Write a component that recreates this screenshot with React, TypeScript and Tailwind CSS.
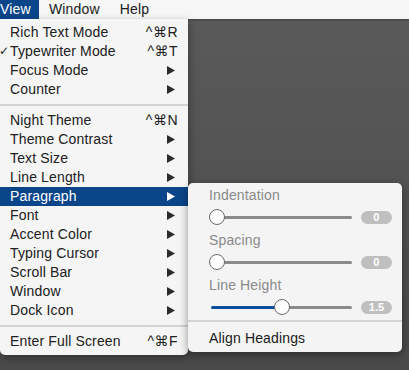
import React from "react";

type Item =
  | { kind: "sep" }
  | { kind: "item"; label: string; shortcut?: string; sub?: boolean; checked?: boolean; active?: boolean };

const items: Item[] = [
  { kind: "item", label: "Rich Text Mode", shortcut: "^⌘R" },
  { kind: "item", label: "Typewriter Mode", shortcut: "^⌘T", checked: true },
  { kind: "item", label: "Focus Mode", sub: true },
  { kind: "item", label: "Counter", sub: true },
  { kind: "sep" },
  { kind: "item", label: "Night Theme", shortcut: "^⌘N" },
  { kind: "item", label: "Theme Contrast", sub: true },
  { kind: "item", label: "Text Size", sub: true },
  { kind: "item", label: "Line Length", sub: true },
  { kind: "item", label: "Paragraph", sub: true, active: true },
  { kind: "item", label: "Font", sub: true },
  { kind: "item", label: "Accent Color", sub: true },
  { kind: "item", label: "Typing Cursor", sub: true },
  { kind: "item", label: "Scroll Bar", sub: true },
  { kind: "item", label: "Window", sub: true },
  { kind: "item", label: "Dock Icon", sub: true },
  { kind: "sep" },
  { kind: "item", label: "Enter Full Screen", shortcut: "^⌘F" },
];

function Arrow({ white }: { white?: boolean }) {
  return (
    <svg width="8" height="9" viewBox="0 0 8 9" className="mr-[3px]">
      <polygon points="0,0 8,4.5 0,9" fill={white ? "#ffffff" : "#2b2b2b"} />
    </svg>
  );
}

function Separator({ h = "h-[12px]" }: { h?: string }) {
  return (
    <div className={"flex items-center " + h}>
      <div className="h-[2px] w-full bg-[#d3d3d3]" />
    </div>
  );
}

function Slider({ value, pct, label }: { value: string; pct: number; label: string }) {
  return (
    <div>
      <div className="h-[22px] leading-[22px] text-[#8a8a8a]">{label}</div>
      <div className="flex h-[22px] items-center gap-[9px]">
        <div className="relative h-[16px] w-[143px]">
          <div className="absolute left-[8px] right-0 top-[6.5px] h-[3px] rounded-full bg-[#8a8a8a]" />
          {pct > 0 && (
            <div
              className="absolute left-[2px] top-[6.5px] h-[3px] rounded-full bg-[#0b50a0]"
              style={{ width: `${pct}px` }}
            />
          )}
          <div
            className="absolute top-0 h-[16px] w-[16px] rounded-full border border-[#6b6b6b] bg-white"
            style={{ left: `${pct}px` }}
          />
        </div>
        <div className="flex h-[13px] w-[31px] items-center justify-center rounded-full bg-[#bfbfbf] text-[11px] font-bold leading-none text-white">
          {value}
        </div>
      </div>
    </div>
  );
}

export default function App() {
  return (
    <div
      className="relative h-[370px] w-[409px] overflow-hidden bg-gradient-to-b from-[#5b5b5b] to-[#4a4a4a] text-[14px] tracking-[0.15px] text-[#202020]"
      style={{ fontFamily: '"Liberation Sans", "DejaVu Sans", sans-serif' }}
    >
      {/* Menu bar */}
      <div className="flex h-[19px] items-center bg-[#f6f6f6] leading-[19px] shadow-[0_1px_2px_rgba(0,0,0,0.3)]">
        <div className="h-[19px] w-[39px] bg-[#0b4589] text-white">View</div>
        <div className="ml-[10px]">Window</div>
        <div className="ml-[20px]">Help</div>
      </div>

      {/* View menu */}
      <div className="absolute left-0 top-[19px] w-[188px] rounded-b-[5px] bg-[#f5f5f5] pb-[4px] pt-[4px] shadow-[1px_3px_8px_rgba(0,0,0,0.35)]">
        {items.map((it, i) =>
          it.kind === "sep" ? (
            <Separator key={i} />
          ) : (
            <div
              key={i}
              className={
                "relative flex h-[19px] items-center justify-between pl-[10px] pr-[10px] " +
                (it.active ? "bg-[#0b4589] text-white" : "")
              }
            >
              {it.checked && (
                <span className="absolute left-[-1px] top-0 text-[12px] font-bold leading-[19px]">✓</span>
              )}
              <span>{it.label}</span>
              {it.shortcut && <span className="tracking-[0.5px]">{it.shortcut}</span>}
              {it.sub && <Arrow white={it.active} />}
            </div>
          )
        )}
      </div>

      {/* Paragraph submenu */}
      <div className="absolute left-[188px] top-[183px] h-[169px] w-[214px] rounded-[5px] bg-[#f4f4f4] pt-[1px] shadow-[0_3px_10px_rgba(0,0,0,0.4)]">
        <div className="flex flex-col gap-[1px] pl-[21px] pr-[10px]">
          <Slider label="Indentation" value="0" pct={0} />
          <Slider label="Spacing" value="0" pct={0} />
          <Slider label="Line Height" value="1.5" pct={65} />
        </div>
        <Separator h="h-[5px]" />
        <div className="mt-[5px] h-[20px] pl-[21px] leading-[20px]">Align Headings</div>
      </div>
    </div>
  );
}
